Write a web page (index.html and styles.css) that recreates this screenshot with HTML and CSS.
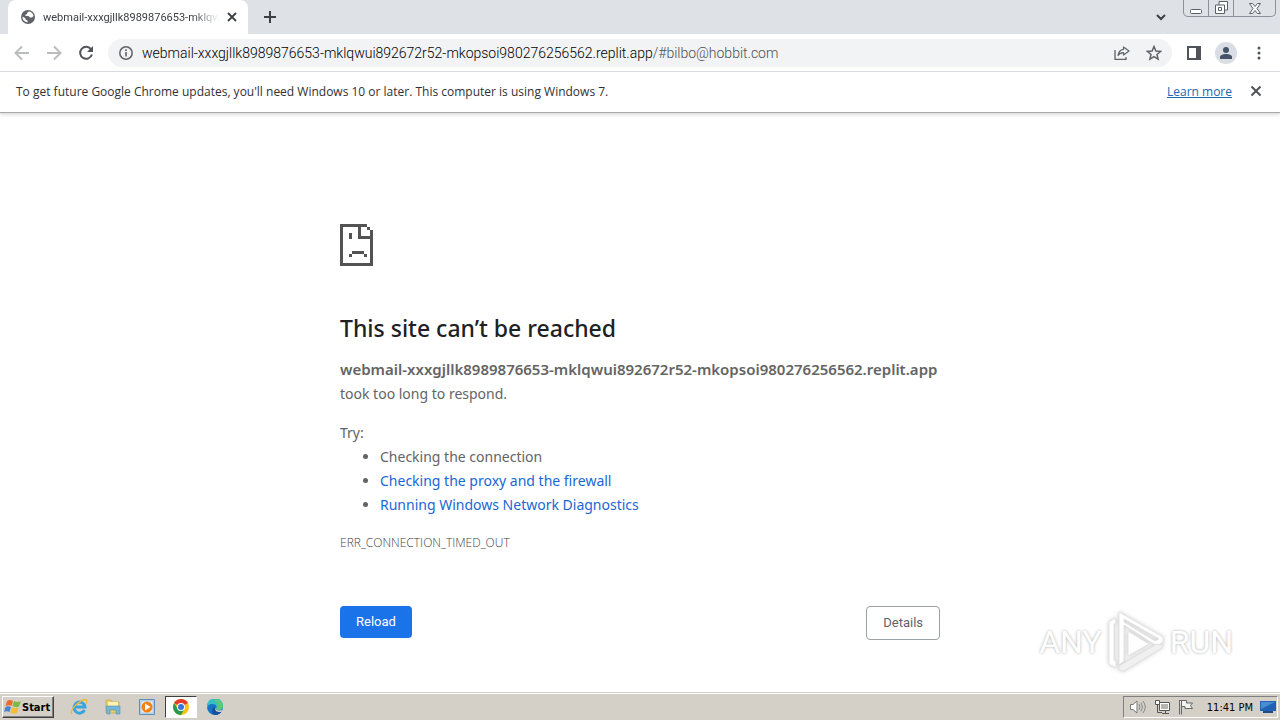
FILE: index.html
```html
<!DOCTYPE html>
<html lang="en">
<head>
<meta charset="utf-8">
<title>This site can’t be reached</title>
<link rel="stylesheet" href="styles.css">
</head>
<body>
<header class="tabstrip">
  <div class="tab">
    <svg class="globe" width="14" height="14" viewBox="0 0 14 14"><circle cx="7" cy="7" r="7" fill="#5f6368"/><path d="M8 1.500C6 2 6.500 3.500 5.500 4.500H4.500V6H7.500L9 7.500H11L12.500 6A5.500 5.500 0 0 0 8 1.500ZM1.500 6.500L4.500 8.500V9.500L6.500 10.500V12.500A5.500 5.500 0 0 1 1.500 6.500Z" fill="#fff"/></svg>
    <span class="tab-title">webmail-xxxgjllk8989876653-mklqwu</span>
    <button class="icon-btn" aria-label="Close tab"><svg width="10" height="10" viewBox="0 0 10 10"><path d="M1 1L9 9M9 1L1 9" stroke="#3c4043" stroke-width="1.800"/></svg></button>
  </div>
  <button class="icon-btn new-tab" aria-label="New tab"><svg width="12" height="12" viewBox="0 0 12 12"><path d="M6 0V12M0 6H12" stroke="#3c4043" stroke-width="2"/></svg></button>
  <button class="icon-btn search-tabs" aria-label="Search tabs"><svg width="10" height="7" viewBox="0 0 10 7"><path d="M1 1L5 5L9 1" fill="none" stroke="#3c4043" stroke-width="2"/></svg></button>
  <div class="window-controls">
    <button aria-label="Minimize"><svg width="12" height="5" viewBox="0 0 12 5"><rect x=".5" y=".5" width="11" height="4" rx="1" fill="#fff" stroke="#5b6068"/></svg></button>
    <button aria-label="Restore"><svg width="13" height="13" viewBox="0 0 13 13"><path d="M4 .5H12.500V9H9.500V12.500H.5V4H4Z" fill="#fff" stroke="#5b6068"/><path d="M4 4H9.500V9M3.500 6.500H6.500V9.500H3.500Z" fill="none" stroke="#5b6068"/></svg></button>
    <button class="wide" aria-label="Close"><svg width="12" height="11" viewBox="0 0 12 11"><path d="M.5.500H3.500L6 3.500L8.500.500H11.500L8 5.500L11.500 10.500H8.500L6 7.500L3.500 10.500H.5L4 5.500Z" fill="#fff" stroke="#5b6068"/></svg></button>
  </div>
</header>
<nav class="toolbar">
  <button class="icon-btn nav-btn" aria-label="Back"><svg width="16" height="16" viewBox="0 0 16 16"><path d="M15 8H2M8 1.500L1.500 8L8 14.500" fill="none" stroke="#babcbe" stroke-width="2"/></svg></button>
  <button class="icon-btn nav-btn" aria-label="Forward"><svg width="16" height="16" viewBox="0 0 16 16"><path d="M1 8H14M8 1.500L14.500 8L8 14.500" fill="none" stroke="#babcbe" stroke-width="2"/></svg></button>
  <button class="icon-btn nav-btn" aria-label="Reload page"><svg width="16" height="16" viewBox="0 0 16 16"><path d="M13.200 4.500A6 6 0 1 0 13.900 9.500" fill="none" stroke="#505357" stroke-width="2"/><path d="M15 1V7H9Z" fill="#505357"/></svg></button>
  <div class="omnibox">
    <svg width="14" height="14" viewBox="0 0 14 14"><circle cx="7" cy="7" r="6.200" fill="none" stroke="#5f6368" stroke-width="1.500"/><path d="M7 6V10.500M7 3.300V4.900" stroke="#5f6368" stroke-width="1.600"/></svg>
    <span class="url">webmail-xxxgjllk8989876653-mklqwui892672r52-mkopsoi980276256562.replit.app<span class="path">/#bilbo@hobbit.com</span></span>
    <button class="icon-btn" aria-label="Share"><svg width="16" height="14" viewBox="0 0 16 14"><path d="M1 4V13.300H12V11" fill="none" stroke="#5f6368" stroke-width="1.300"/><path d="M9.500 1L15 5L9.500 9V6.700C7 6.700 5.300 7.500 4 9.500C4.500 6 6.500 3.800 9.500 3.300Z" fill="none" stroke="#5f6368" stroke-width="1.200" stroke-linejoin="round"/></svg></button>
    <button class="icon-btn" aria-label="Bookmark this page"><svg width="16" height="16" viewBox="0 0 16 16"><path d="M8 1.500L9.900 6L14.700 6.400L11 9.500L12.100 14.200L8 11.700L3.900 14.200L5 9.500L1.300 6.400L6.100 6Z" fill="none" stroke="#5f6368" stroke-width="1.500"/></svg></button>
  </div>
  <button class="icon-btn side-panel" aria-label="Side panel"><svg width="14" height="14" viewBox="0 0 14 14"><path d="M1 1H13V13H1Z" fill="none" stroke="#505357" stroke-width="2"/><path d="M9 1H13V13H9Z" fill="#505357"/></svg></button>
  <button class="icon-btn profile" aria-label="Profile"><svg width="14" height="14" viewBox="0 0 14 14"><circle cx="7" cy="4" r="3" fill="#46536b"/><path d="M1 13V11C1 9 4 8 7 8S13 9 13 11V13Z" fill="#46536b"/></svg></button>
  <button class="icon-btn menu" aria-label="Menu"><svg width="4" height="14" viewBox="0 0 4 14"><g fill="#505357"><circle cx="2" cy="2" r="1.500"/><circle cx="2" cy="7" r="1.500"/><circle cx="2" cy="12" r="1.500"/></g></svg></button>
</nav>
<div class="infobar">
  <span>To get future Google Chrome updates, you'll need Windows 10 or later. This computer is using Windows 7.</span>
  <a class="learn" href="#">Learn more</a>
  <button class="icon-btn" aria-label="Dismiss"><svg width="12" height="12" viewBox="0 0 12 12"><path d="M1.500 1.500L10.500 10.500M10.500 1.500L1.500 10.500" stroke="#505357" stroke-width="2"/></svg></button>
</div>
<main class="page">
  <div class="error">
    <svg class="sad" width="33" height="42" viewBox="0 0 11 14" shape-rendering="crispEdges" fill="#535353"><path d="M0 0H9V1H1V13H10V5H6V1H7V4H10V2H11V14H0ZM9 1H10V2H9ZM3 3H4V5H3ZM4 9H8V10H4ZM3 10H4V11H3ZM8 10H9V11H8Z"/></svg>
    <h1>This site can’t be reached</h1>
    <p><strong>webmail-xxxgjllk8989876653-mklqwui892672r52-mkopsoi980276256562.replit.app</strong></p>
    <p>took too long to respond.</p>
    <div class="try">
      <p>Try:</p>
      <ul>
        <li>Checking the connection</li>
        <li><a href="#">Checking the proxy and the firewall</a></li>
        <li><a href="#">Running Windows Network Diagnostics</a></li>
      </ul>
    </div>
    <div class="code">ERR_CONNECTION_TIMED_OUT</div>
    <div class="actions"><button class="reload">Reload</button><button class="details">Details</button></div>
  </div>
  <div class="watermark">
    <span>ANY</span>
    <svg width="58" height="64" viewBox="0 0 58 64"><g fill="#fff" stroke="#e3e3e3" stroke-width="1"><path d="M8 8L2 12V54L9 58V52L7 50V14L9 13Z"/><path fill-rule="evenodd" d="M12 2L56 27V32L50 36L17 15V51L12 55ZM17 9V12L48 31L52 29Z"/><path fill="#f0f0f0" d="M12 56L50 34L56 35V37L17 61L12 60Z"/><path d="M21 21L42 34L21 46Z"/></g></svg>
    <span>RUN</span>
  </div>
</main>
<footer class="taskbar">
  <button class="start"><svg width="18" height="16" viewBox="0 0 18 16"><path d="M3 2Q6 0 9 2L7.500 7Q5 5.500 1.500 7Z" fill="#ed6b2d"/><path d="M10 2Q13 4 17 2L15 7.500Q12 9 8.500 7Z" fill="#80b941"/><path d="M1.500 8Q4 6.500 7 8L5.500 13Q3 11.500 0 13Z" fill="#4386cf"/><path d="M8 8.500Q11 10 14.500 8.500L13 14Q9.500 15.500 6.500 13.500Z" fill="#f5bd30"/></svg>Start</button>
  <button class="task" aria-label="Internet Explorer"><svg width="18" height="18" viewBox="0 0 18 18"><path d="M14.500 12A5.500 5.500 0 1 1 15 9H5" fill="none" stroke="#39a5dd" stroke-width="3"/><path d="M2 16C-1 13 8 3 15 1.500C18 1 17 4 15.500 6" fill="none" stroke="#e9b93c" stroke-width="1.300"/></svg></button>
  <button class="task" aria-label="Explorer"><svg width="18" height="18" viewBox="0 0 18 18"><path d="M2 2H7L8 4H15V15H2Z" fill="#edcf68" stroke="#c9a541" stroke-width=".7"/><path d="M4 4H14V9H4Z" fill="#fff3b1"/><path d="M2 8H16V16H12V12H6V16H3Z" fill="#76b6d8" stroke="#4e93b8" stroke-width=".6"/></svg></button>
  <button class="task" aria-label="Media Player"><svg width="18" height="18" viewBox="0 0 18 18"><path d="M1.500 1.500H16.500V16.500H1.500Z" fill="#c6dff3" stroke="#5d8cb9"/><path d="M3 3H15V15H3Z" fill="#e6f1f9" stroke="#8bb2d2" stroke-width=".6"/><circle cx="9" cy="9" r="5.500" fill="#f18218"/><path d="M7 5.500L12.500 9L7 12.500Z" fill="#fff"/></svg></button>
  <button class="task active" aria-label="Chrome"><svg width="16" height="16" viewBox="0 0 16 16"><circle cx="8" cy="8" r="8" fill="#fbc116"/><path d="M8 8L1.100 4A8 8 0 0 1 14.900 4Z" fill="#e33b2e"/><path d="M1.100 4A8 8 0 0 0 8 16L11.300 9.900L8 11.500L4.800 10Z" fill="#269c4c"/><circle cx="8" cy="8" r="4" fill="#fff"/><circle cx="8" cy="8" r="3" fill="#3277dc"/></svg></button>
  <button class="task" aria-label="Edge"><svg width="16" height="16" viewBox="0 0 16 16"><circle cx="8" cy="8" r="8" fill="#1674c6"/><path d="M0 7A8 8 0 0 1 16 7C16 12 9 12 9 9.500C11 7 8 4.500 5 5C2.500 5.300.5 6 0 9Z" fill="#39bfc3"/><path d="M10 .3A8 8 0 0 1 16 7C16 11 11 11.500 9 10C12 7 11 3 7 1Z" fill="#5acb72"/><path d="M8 7.500C7 11 10 13 14.800 12.200A8 8 0 0 1 8 16C4 15 4 10 8 7.500Z" fill="#174f9d"/><path d="M8.500 8.500C8 11 11.500 12.500 15.500 10.800L14.500 12.700C10 14 7 11 8.500 8.500Z" fill="#d4d0c8"/></svg></button>
  <div class="tray">
    <svg width="18" height="16" viewBox="0 0 18 16"><path d="M1.500 5.500H4L8 2V14L4 10.500H1.500Z" fill="#fff" stroke="#777"/><path d="M10 5Q12 8 10 11M12 3.500Q15 8 12 12.500M14 2Q18.500 8 14 14" fill="none" stroke="#888"/></svg>
    <svg width="17" height="16" viewBox="0 0 17 16"><path d="M5.500 3.500H15.500V11.500H5.500Z" fill="#fff" stroke="#555"/><path d="M7 5H14V10H7Z" fill="#b5b5b0"/><path d="M8 14.500H15M11.500 12V14" fill="none" stroke="#555"/><path d="M1.500 1.500H5.500V5.500H1.500Z" fill="#fff" stroke="#555"/><path d="M3.500 5.500V13.500H8" fill="none" stroke="#555"/></svg>
    <svg width="16" height="16" viewBox="0 0 16 16"><path d="M1.500 1V15.500M3.500 1V15.500M1.500 1.500H8.500V4H14.500L12.500 6.500L14.500 9.500H7V7.500H3.500" fill="#f2f2ef" stroke="#666"/></svg>
    <time>11:41 PM</time>
    <svg class="desk" width="16" height="14" viewBox="0 0 16 14"><path d="M0 1H16V11H0Z" fill="#2162b5"/><path d="M1 2H15L1 9Z" fill="#488cd2"/><path d="M3 11H13V13H3Z" fill="#234b7d"/></svg>
  </div>
</footer>
</body>
</html>
```
FILE: styles.css
```css
* { box-sizing: border-box; }
body { margin: 0; min-height: 100vh; display: flex; flex-direction: column; background: #fff; font-family: "Noto Sans", "Open Sans", sans-serif; }
button { font: inherit; padding: 0; border: 0; background: none; }
svg { display: block; flex: none; }
.icon-btn { display: flex; align-items: center; justify-content: center; flex: none; }
.tabstrip { height: 34px; display: flex; align-items: center; background: #dee1e6; padding: 0 4px 0 8px; }
.tab { align-self: stretch; width: 240px; display: flex; align-items: center; gap: 8px; background: #fff; border-radius: 8px 8px 0 0; padding: 0 11px 0 13px; }
.tab-title { flex: 1; min-width: 0; overflow: hidden; white-space: nowrap; font-size: 11px; font-family: Roboto, sans-serif; color: #3c4043; mask-image: linear-gradient(to right, #000 85%, transparent); }
.new-tab { margin-left: 16px; }
.search-tabs { margin-left: auto; margin-right: 17px; }
.window-controls { align-self: flex-start; display: flex; height: 17px; border: 1px solid #8b9099; border-top: 0; border-radius: 0 0 5px 5px; }
.window-controls button { width: 25px; display: flex; align-items: flex-end; justify-content: center; padding-bottom: 2px; border-right: 1px solid #8b9099; }
.window-controls .wide { width: 41px; border-right: 0; }
.toolbar { height: 38px; display: flex; align-items: center; padding: 0 19px 0 14px; border-bottom: 1px solid #d8dade; }
.nav-btn { width: 16px; margin-right: 16px; }
.omnibox { flex: 1; min-width: 0; height: 28px; margin-left: -2px; display: flex; align-items: center; gap: 16px; border-radius: 14px; background: #f1f3f4; padding: 0 10px 0 11px; }
.url { flex: 1; min-width: 0; margin-left: -7px; overflow: hidden; white-space: nowrap; font-family: Roboto, sans-serif; font-weight: 300; font-size: 14px; color: #000; }
.path { color: #4a4e53; }
.side-panel { margin-left: 15px; }
.profile { width: 22px; height: 22px; margin-left: 14px; border-radius: 50%; background: #dadde3; }
.menu { margin-left: 20px; }
.infobar { height: 41px; display: flex; align-items: center; padding: 0 18px 2px 16px; border-bottom: 1px solid #a9a9a9; box-shadow: 0 2px 3px #ddd; font-family: "Open Sans", sans-serif; font-size: 12px; color: #303134; }
.learn { margin-left: auto; margin-right: 18px; color: #1967b5; }
.page { position: relative; flex: 1; padding: 111px 24px 0; }
.error { width: 100%; max-width: 600px; margin: 0 auto; font-size: 14px; line-height: 24px; color: #646464; }
.error a { color: #1967d2; text-decoration: none; }
.error strong { font-family: "Noto Sans", sans-serif; font-size: 15px; font-weight: 600; }
h1 { margin: 48px 0 15px; font-size: 23px; line-height: 28px; font-weight: 500; color: #202124; }
p { margin: 0; }
.try { margin-top: 15px; }
ul { margin: 0; padding-left: 40px; }
.code { margin-top: 14px; font-family: "Open Sans", sans-serif; font-size: 12px; font-weight: 300; color: #444; }
.actions { margin-top: 51px; display: flex; justify-content: space-between; align-items: flex-start; font-family: Roboto, sans-serif; font-size: 13px; line-height: 16px; }
.reload { height: 32px; padding: 0 16px; border-radius: 4px; background: #1a73e8; color: #fff; }
.details { height: 34px; padding: 0 16px; border: 1px solid #9aa0a6; border-radius: 4px; color: #5f6368; }
.watermark { position: absolute; right: 47px; bottom: 18px; display: flex; align-items: center; gap: 5px; color: #fff; font: 32px Roboto, sans-serif; text-shadow: 0 0 3px #aaa; }
.watermark svg { filter: drop-shadow(0 0 2px #ccc); }
.taskbar { height: 28px; display: flex; align-items: center; padding: 2px 0 0 2px; background: #d4d0c8; box-shadow: inset 0 1px #d4d0c8, inset 0 2px #fff; }
.start { height: 22px; display: flex; align-items: center; gap: 0; width: 52px; border: 1px solid; border-color: #fff #404040 #404040 #fff; box-shadow: inset -1px -1px #808080; font: bold 11px "DejaVu Sans Condensed", sans-serif; color: #000; margin-right: 9px; padding-left: 1px; }
.task { width: 32px; height: 22px; display: flex; align-items: center; justify-content: center; margin-right: 2px; }
.active { background: #fff; border: 1px solid; border-color: #404040 #fff #fff #404040; }
.tray { height: 22px; margin-left: auto; margin-right: 2px; display: flex; align-items: center; gap: 7px; padding: 0 1px 0 5px; border: 1px solid; border-color: #808080 #fff #fff #808080; font: 11px "DejaVu Sans Condensed", sans-serif; color: #000; }
.tray time { margin-left: 6px; }
```
